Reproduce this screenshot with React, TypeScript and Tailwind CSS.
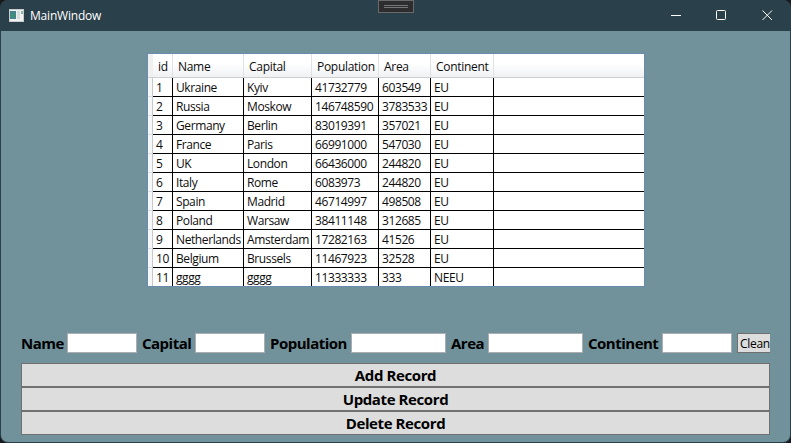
const columns = [
  { title: 'id', width: 'w-[20px]' },
  { title: 'Name', width: 'w-[71px]' },
  { title: 'Capital', width: 'w-[68px]' },
  { title: 'Population', width: 'w-[67px]' },
  { title: 'Area', width: 'w-[52px]' },
  { title: 'Continent', width: 'w-[63px]' },
];

const rows: string[][] = [
  ['1', 'Ukraine', 'Kyiv', '41732779', '603549', 'EU'],
  ['2', 'Russia', 'Moskow', '146748590', '3783533', 'EU'],
  ['3', 'Germany', 'Berlin', '83019391', '357021', 'EU'],
  ['4', 'France', 'Paris', '66991000', '547030', 'EU'],
  ['5', 'UK', 'London', '66436000', '244820', 'EU'],
  ['6', 'Italy', 'Rome', '6083973', '244820', 'EU'],
  ['7', 'Spain', 'Madrid', '46714997', '498508', 'EU'],
  ['8', 'Poland', 'Warsaw', '38411148', '312685', 'EU'],
  ['9', 'Netherlands', 'Amsterdam', '17282163', '41526', 'EU'],
  ['10', 'Belgium', 'Brussels', '11467923', '32528', 'EU'],
  ['11', 'gggg', 'gggg', '11333333', '333', 'NEEU'],
];

const fields = [
  { label: 'Name', labelWidth: 'w-[46px]', inputWidth: 'w-[70px]' },
  { label: 'Capital', labelWidth: 'w-[53px]', inputWidth: 'w-[70px]' },
  { label: 'Population', labelWidth: 'w-[81px]', inputWidth: 'w-[95px]' },
  { label: 'Area', labelWidth: 'w-[37px]', inputWidth: 'w-[95px]' },
  { label: 'Continent', labelWidth: 'w-[74px]', inputWidth: 'w-[70px]' },
];

function TitleBar() {
  return (
    <header className="relative flex h-[31px] shrink-0 items-center bg-[#2a404a] pl-[9px] text-white">
      <svg width="15" height="13" viewBox="0 0 15 13" className="mr-[6px] -mt-[1px]">
        <rect width="15" height="13" fill="#c9cccd" />
        <rect x="1" y="1" width="13" height="11" fill="#f1f1f1" />
        <rect x="1" y="2" width="6" height="8" fill="#4b8290" />
        <rect x="2" y="4" width="4" height="5" fill="#3f8f78" />
        <rect x="8" y="2" width="3" height="8" fill="#d9dcde" />
        <rect x="12" y="2" width="2" height="3" fill="#86b8a8" />
      </svg>
      <span className="text-[12px] leading-[16px] tracking-[-0.2px]">MainWindow</span>
      <div className="ml-auto flex items-center pr-[18px]">
        <svg width="102" height="11" viewBox="0 0 102 11" fill="none" stroke="#fff" className="-mt-[1px]">
          <path d="M0 5.5H10" />
          <rect x="45.5" y="0.5" width="9" height="9" rx="1" />
          <path d="M91.5 .5L101 10M101 .5L91.5 10" />
        </svg>
      </div>
      <div className="absolute left-[378px] top-0 flex h-[13px] w-[36px] flex-col items-center gap-px border border-[#6a6a6a] bg-[#2d2d30] pt-[4px]">
        <i className="h-px w-[24px] bg-[#777]" />
        <i className="h-px w-[24px] bg-[#777]" />
      </div>
    </header>
  );
}

function DataGrid() {
  return (
    <section className="ml-[146px] mt-[22px] h-[234px] w-[498px] overflow-hidden border border-[#688caf] bg-white text-[12px] tracking-[-0.4px] text-[#0c0c0c]">
      <div className="flex h-[24px] border-b border-[#d0d0d0] bg-gradient-to-b from-white from-40% to-[#eff1f3]">
        <div className="w-[5px] bg-[#f0f0f0]" />
        {columns.map((c) => (
          <div key={c.title} className={`${c.width} shrink-0 whitespace-nowrap border-r border-[#dfe1e3] pl-[5px] leading-[25px] tracking-[-0.3px]`}>
            {c.title}
          </div>
        ))}
      </div>
      {rows.map((row) => (
        <div key={row[0]} className="flex h-[19px]">
          <div className="w-[5px] shrink-0 border-b border-r border-b-[#dcdfe8] border-r-[#c8c8c8] bg-[#f6f7f9]" />
          <div className="flex grow border-b border-black">
            {row.map((cell, i) => (
              <div key={i} className={`${columns[i].width} shrink-0 whitespace-nowrap border-r border-black pl-[3px] leading-[20px]`}>
                {cell}
              </div>
            ))}
          </div>
        </div>
      ))}
    </section>
  );
}

export default function App() {
  return (
    <div className="h-[443px] w-[791px] bg-[#17191c] font-['Open_Sans','Noto_Sans',sans-serif]">
      <div className="flex h-full flex-col overflow-hidden rounded-[8px] bg-[#2a404a]">
        <TitleBar />
        <main className="mx-px mb-px grow rounded-b-[7px] bg-[#71929a]">
          <DataGrid />
          <form className="ml-[20px] mt-[46px] flex h-[20px] w-[749px] overflow-hidden">
            {fields.map((f) => (
              <label key={f.label} className="mr-[5px] flex">
                <span className={`${f.labelWidth} whitespace-nowrap text-[15px] font-bold leading-[20px] tracking-[-0.5px] text-black`}>{f.label}</span>
                <input className={`${f.inputWidth} h-[20px] border border-[#abadb3] bg-white outline-none`} />
              </label>
            ))}
            <button type="button" className="h-[20px] w-[34px] shrink-0 whitespace-nowrap border border-r-0 border-[#707070] bg-[#ddd] pl-[2px] text-left text-[12px] leading-[19px] tracking-[-0.3px] text-black">
              Clean
            </button>
          </form>
          <div className="ml-[20px] mt-[10px] flex w-[749px] flex-col">
            {['Add Record', 'Update Record', 'Delete Record'].map((t) => (
              <button key={t} type="button" className="h-[24px] border border-[#707070] bg-[#ddd] text-[15px] font-bold leading-[22px] tracking-[-0.4px] text-black">
                {t}
              </button>
            ))}
          </div>
        </main>
      </div>
    </div>
  );
}
